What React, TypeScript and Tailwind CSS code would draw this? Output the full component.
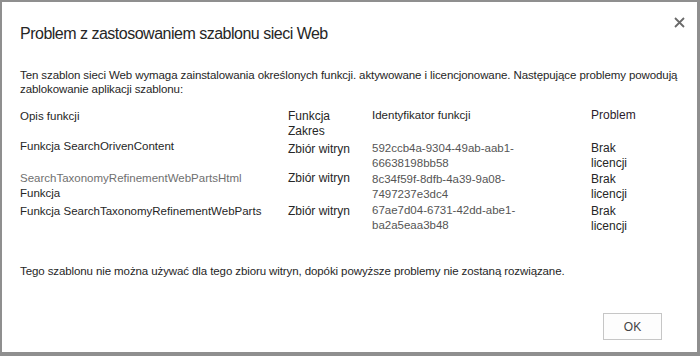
import React from 'react';

const rows = [
  {
    name: ['Funkcja SearchOrivenContent'],
    scope: 'Zbiór witryn',
    id: ['592ccb4a-9304-49ab-aab1-', '66638198bb58'],
    gray: false,
    pad: ['pt-0', 'pt-[3px]', 'pt-[2px]', 'pt-[2px]'],
  },
  {
    name: ['SearchTaxonomyRefinementWebPartsHtml', 'Funkcja'],
    scope: 'Zbiór witryn',
    id: ['8c34f59f-8dfb-4a39-9a08-', '7497237e3dc4'],
    gray: true,
    pad: ['pt-0', 'pt-0', 'pt-[1px]', 'pt-[1.5px]'],
  },
  {
    name: ['Funkcja SearchTaxonomyRefinementWebParts'],
    scope: 'Zbiór witryn',
    id: ['67ae7d04-6731-42dd-abe1-', 'ba2a5eaa3b48'],
    gray: false,
    pad: ['pt-[2px]', 'pt-[2px]', 'pt-[1px]', 'pt-[2px]'],
  },
];

export default function App() {
  return (
    <div
      className="w-[700px] h-[356px] bg-white border-l-2 border-t-2 border-r-[3px] border-b-[4px] border-[#8f8f8f] text-[#262626] overflow-hidden"
      style={{ fontFamily: '"Liberation Sans", Arial, sans-serif' }}
    >
      <div className="relative flex flex-col h-full pl-[18px]">
        {/* Schließen */}
        <button className="absolute right-[10px] top-[12px] w-[16px] h-[16px] flex items-center justify-center">
          <svg width="11" height="11" viewBox="0 0 11 11">
            <path d="M1 1 L10 10 M10 1 L1 10" stroke="#6a6a6a" strokeWidth="1.8" />
          </svg>
        </button>

        <h1 className="mt-[20px] text-[16px] leading-[24px] tracking-[-0.5px] text-[#262626] font-normal">
          Problem z zastosowaniem szablonu sieci Web
        </h1>

        <p className="mt-[22px] w-[670px] text-[11.5px] leading-[14px] tracking-[-0.1px]">
          Ten szablon sieci Web wymaga zainstalowania określonych funkcji. aktywowane i licencjonowane. Następujące problemy powodują zablokowanie aplikacji szablonu:
        </p>

        <div className="mt-[11.5px] grid grid-cols-[268px_84px_219px_1fr] text-[12px] leading-[15px]">
          <div className="pt-[1px] text-[11.5px]">Opis funkcji</div>
          <div className="pt-[1px]">
            <div>Funkcja</div>
            <div>Zakres</div>
          </div>
          <div className="text-[11.5px]">Identyfikator funkcji</div>
          <div className="text-[#2b1b2b]">Problem</div>

          {rows.map((r, i) => (
            <React.Fragment key={i}>
              <div className={`${r.pad[0]} text-[11.5px]`}>
                {r.name.map((n, j) => (
                  <div key={j} className={r.gray && j === 0 ? 'text-[#707070]' : ''}>
                    {n}
                  </div>
                ))}
              </div>
              <div className={r.pad[1]}>{r.scope}</div>
              <div className={`${r.pad[2]} text-[11.5px] text-[#555]`}>
                {r.id.map((n, j) => (
                  <div key={j}>{n}</div>
                ))}
              </div>
              <div className={r.pad[3]}>
                <div>Brak</div>
                <div>licencji</div>
              </div>
            </React.Fragment>
          ))}
        </div>

        <p className="mt-[29.5px] text-[11.5px] leading-[14px] tracking-[-0.1px]">
          Tego szablonu nie można używać dla tego zbioru witryn, dopóki powyższe problemy nie zostaną rozwiązane.
        </p>

        <div className="mt-auto mb-[12px] flex justify-end pr-[35px]">
          <button className="w-[59px] h-[27px] border border-[#c6c6c6] bg-[#fdfdfd] text-[12px] text-[#444]">
            OK
          </button>
        </div>
      </div>
    </div>
  );
}
